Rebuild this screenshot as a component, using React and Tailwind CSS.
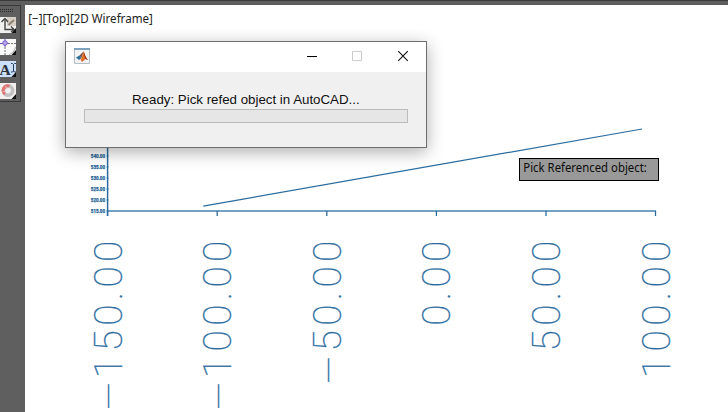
const INK = "#2b6c9f";

const xLabels = [
  { tick: 107.5, base: 121.5, digits: "150.00", minus: 396 },
  { tick: 217.2, base: 231.2, digits: "100.00", minus: 396 },
  { tick: 326.8, base: 340.8, digits: "50.00", minus: 370 },
  { tick: 436.4, base: 450.4, digits: "0.00" },
  { tick: 546, base: 560, digits: "50.00" },
  { tick: 655.5, base: 669.5, digits: "100.00" },
];
const digitCenters = [367.5, 340.7, 315, 296, 276.7, 251.3];
const yLabels = ["540.00", "535.00", "530.00", "525.00", "520.00", "515.00"];

function AxisLabel({ base, digits, minus }) {
  const xs = digitCenters.slice(6 - digits.length).map((y) => -y).join(" ");
  return (
    <g transform={`translate(${base} 0) rotate(-90)`} textAnchor="middle">
      <text x={xs} y="0">{digits}</text>
      {minus && <text x={-minus} y="0.8" fontSize="36">—</text>}
    </g>
  );
}

function Chart() {
  return (
    <svg width="703" height="407" viewBox="25 5 703 407" className="block font-['Roboto',sans-serif]">
      <g stroke={INK} fill="none">
        <path d="M107.6 140V216" strokeWidth="1.5" />
        <path d="M107 211H656" strokeWidth="1.6" stroke="#4681ad" />
        {xLabels.map((l) => <path key={l.tick} d={`M${l.tick} 211V216`} strokeWidth="1.3" />)}
        {yLabels.map((l, i) => <path key={l} d={`M106.6 ${156 + i * 11}h2`} strokeWidth="1" />)}
        <path d="M203.3 206.1L642 129" strokeWidth="1.25" />
      </g>
      <g fill="#1e5f93" stroke="#1e5f93" strokeWidth="0.25" fontSize="5.4" fontWeight="700">
        {yLabels.map((l, i) => (
          <text key={l} x="90.8" y={158 + i * 11} textLength="14.2" lengthAdjust="spacingAndGlyphs">{l}</text>
        ))}
      </g>
      <g fill={INK} stroke={INK} strokeWidth="0.3" fontSize="39" fontWeight="100">
        {xLabels.map((l) => <AxisLabel key={l.tick} {...l} />)}
      </g>
    </svg>
  );
}

function ToolIcon({ children, tint }) {
  return (
    <svg width="16" height="16" viewBox="0 0 16 16" className="block">
      <path d="M0 0H16V16H0Z" fill={tint} />
      {children}
      <path d="M16 11V16H11.5Z" fill="#111" />
    </svg>
  );
}

function Toolbar() {
  return (
    <div className="h-[97px] w-[21px] border-r border-b border-t border-[#383838] bg-[#5f5f5f]">
      <div className="h-[11px] pt-[3px]">
        <svg width="14" height="5" className="block">
          {[0, 2].map((y) => (
            <path key={y} d={`M0 ${y + 0.5}H14`} stroke="#292929" strokeDasharray="1 1" />
          ))}
        </svg>
      </div>
      <div className="flex flex-col gap-1.5">
        <ToolIcon tint="#f0f0ee">
          <path d="M7 0H16V9H7Z" fill="#d5cfc6" />
          <path d="M5 3V12.5H13" stroke="#444" strokeWidth="1.4" fill="none" />
          <path d="M1.5 5L5 1.5L8 5M11 9.5L14 12.5L11 15" stroke="#444" strokeWidth="1.4" fill="none" />
          <path d="M8.5 8L14 3" stroke="#8f8171" strokeWidth="2" />
        </ToolIcon>
        <ToolIcon tint="#fafafa">
          <path d="M5 5V16M5 4.5H16" stroke="#777" strokeDasharray="2 1" />
          <path d="M5 0V8M0 4.5H9" stroke="#6e50bd" />
          <circle cx="5" cy="4" r="2.3" fill="#b7a4ee" stroke="#7e66ca" />
          <path d="M9 16Q14 14 16 8" stroke="#aaa" fill="none" />
        </ToolIcon>
        <ToolIcon tint="#cbdffa">
          <text x="-0.5" y="14" fontSize="15.5" fontWeight="700" fill="#29323a" className="font-['Liberation_Serif',serif]">A</text>
          <path d="M11 2.5H12.5L13.5 3.5L14.5 2.5H16M13.5 3.5V10M11 11H12.5L13.5 10L14.5 11H16" stroke="#263b55" fill="none" />
        </ToolIcon>
        <ToolIcon tint="#f1f0ef">
          <circle cx="8" cy="7.5" r="4.7" stroke="#c3c1c1" strokeWidth="3.5" fill="#eef0f1" />
          <path d="M5 11.2A4.7 4.7 0 0 1 9.5 3.1" stroke="#dd7573" strokeWidth="3" fill="none" />
          <path d="M5 3L7 6M2.5 9L5.5 8" stroke="#f0b5b2" />
        </ToolIcon>
      </div>
    </div>
  );
}

function MatlabIcon() {
  return (
    <svg width="16" height="16" viewBox="0 0 16 16">
      <path d="M.5.5H15.5V15.5H.5Z" fill="#f1f3f5" stroke="#b4bdc4" />
      <path d="M0 0H16V2H0Z" fill="#7fa3be" />
      <path d="M2 9.5L5.5 7.5L7.5 9L5 12Z" fill="#2d7098" />
      <path d="M5.5 7.5L9.5 3.5L8.2 8.5L6.5 11L5 11.8L7.3 9Z" fill="#7d5148" />
      <path d="M9.5 3.5C10.7 4.5 11.4 9.6 14 12L11.5 11L8 14L6.5 11.5C8.3 10.7 8.5 6.2 9.5 3.5Z" fill="#df6e22" />
      <path d="M9.5 3.5C11 6 11.5 10 14 12L11.5 11C10.4 9 10.4 6 9.5 3.5Z" fill="#9b2b1d" />
    </svg>
  );
}

function Dialog() {
  return (
    <div className="absolute top-[41px] left-[65px] flex h-[107px] w-[362px] flex-col border border-[#6e6e6e] bg-[#f0f0f0] shadow-[0_4px_16px_rgba(0,0,0,0.32)]">
      <div className="flex h-[30px] items-center justify-between bg-white pr-[17px] pb-0.5 pl-2">
        <MatlabIcon />
        <svg width="102" height="12" viewBox="0 0 102 12" fill="none">
          <path d="M0 6.5H10" stroke="#000" />
          <path d="M45.5 1.5H54.5V10.5H45.5Z" stroke="#cccccc" />
          <path d="M91.2 1.2L100.8 10.8M100.8 1.2L91.2 10.8" stroke="#111" strokeWidth="1.1" />
        </svg>
      </div>
      <div className="flex flex-col px-[18px] pt-[19px]">
        <div className="h-[18px] pl-12 font-['Liberation_Sans',sans-serif] text-[13.3px] leading-[18px] whitespace-nowrap text-[#111]">
          Ready: Pick refed object in AutoCAD...
        </div>
        <div className="h-[14px] border border-[#bcbcbc] bg-[#e6e6e6]" />
      </div>
    </div>
  );
}

export default function App() {
  return (
    <div className="relative flex h-[412px] w-[728px] flex-col overflow-hidden bg-[#5f5f5f]">
      <div className="h-[5px] shrink-0 border-t border-[#3a3a3a] bg-[#5e5e5e]" />
      <div className="flex min-h-0 flex-1">
        <div className="w-[25px] shrink-0"><Toolbar /></div>
        <main className="h-[407px] w-[703px] bg-white"><Chart /></main>
      </div>
      <svg width="124" height="18" className="absolute top-[10px] left-[29px] overflow-visible font-['Noto_Sans',sans-serif]">
        <text x="-0.7" y="13" fontSize="12" fill="#222" textLength="124.5" lengthAdjust="spacingAndGlyphs">[−][Top][2D Wireframe]</text>
      </svg>
      <Dialog />
      <div className="absolute top-[158px] left-[519px] h-[23px] w-[140px] border border-black bg-[#999999] pl-1 font-['Noto_Sans',sans-serif]">
        <svg width="124" height="21" className="block overflow-visible">
          <text x="-0.7" y="13" fontSize="12" fill="#0c0c0c" textLength="123.5" lengthAdjust="spacingAndGlyphs">Pick Referenced object:</text>
        </svg>
      </div>
    </div>
  );
}
